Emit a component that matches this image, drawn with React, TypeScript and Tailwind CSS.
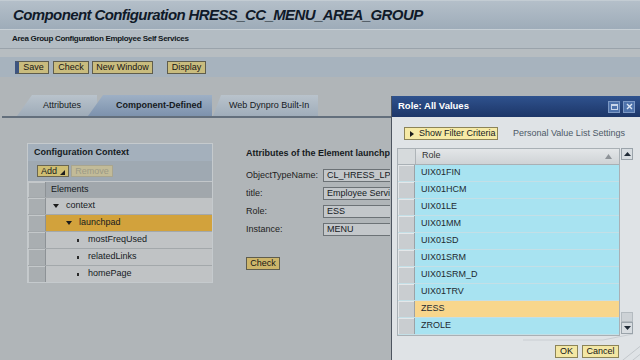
import React from 'react';

const treeRows = [
    { label: 'context', pad: 'pl-[7px]', kind: 'tri', selected: false },
    { label: 'launchpad', pad: 'pl-[20px]', kind: 'tri', selected: true },
    { label: 'mostFreqUsed', pad: 'pl-[31px]', kind: 'dot', selected: false },
    { label: 'relatedLinks', pad: 'pl-[31px]', kind: 'dot', selected: false },
    { label: 'homePage', pad: 'pl-[31px]', kind: 'dot', selected: false },
];

const attrs = [
    { label: 'ObjectTypeName:', value: 'CL_HRESS_LPD_MENU' },
    { label: 'title:', value: 'Employee Services' },
    { label: 'Role:', value: 'ESS' },
    { label: 'Instance:', value: 'MENU' },
];

const roles = ['UIX01FIN', 'UIX01HCM', 'UIX01LE', 'UIX01MM', 'UIX01SD', 'UIX01SRM', 'UIX01SRM_D', 'UIX01TRV', 'ZESS', 'ZROLE'];

const ToolButton: React.FC<{ children: React.ReactNode; className?: string }> = ({ children, className = '' }) => (
    <div className={`h-[13px] flex items-center justify-center border border-[#5f5d4d] bg-[#c9bc7e] text-[9px] leading-none text-[#151515] ${className}`}>
        {children}
    </div>
);

const SelCell: React.FC<{ className?: string }> = ({ className = '' }) => (
    <div className={`w-[18px] shrink-0 self-stretch border-r border-[#8d9296] bg-[#a9aeb1] shadow-[inset_1px_1px_0_#c4c8ca] ${className}`} />
);

export default function App() {
    return (
        <div className="relative w-[640px] h-[360px] overflow-hidden bg-[#b0b5b8] font-['Liberation_Sans',Arial,sans-serif] text-[#161a1e]">
            {/* page header */}
            <div className="h-[30px] flex items-center pl-[13px] bg-gradient-to-b from-[#b4bfc9] to-[#9eacb9] border-t border-[#c3ccd3] border-b border-b-[#c7cfd5]">
                <span className="text-[15px] font-bold italic tracking-[-0.6px] text-[#101a29]">Component Configuration HRESS_CC_MENU_AREA_GROUP</span>
            </div>
            <div className="h-[19px] flex items-center pl-[12px] bg-[#b3bcc3] border-b border-[#9aa3ab]">
                <span className="text-[8px] font-bold tracking-[-0.3px] text-[#121820]">Area Group Configuration Employee Self Services</span>
            </div>
            <div className="h-[8px] bg-[#b7bdc1]" />
            <div className="h-[20px] flex items-center pl-[15px] bg-[#a7b3be]">
                <ToolButton className="w-[34px] border-l-[4px] border-l-[#3e5580]">Save</ToolButton>
                <ToolButton className="w-[36px] ml-[4px]">Check</ToolButton>
                <ToolButton className="w-[61px] ml-[3px]">New Window</ToolButton>
                <ToolButton className="w-[39px] ml-[14px]">Display</ToolButton>
            </div>

            {/* tabs */}
            <div className="mt-[18px] flex items-end h-[21px]">
                <div className="ml-[17px] w-[80px] h-[21px] flex items-center pl-[26px] bg-gradient-to-b from-[#b9c3cc] to-[#9eabb8] [clip-path:polygon(15px_0,100%_0,100%_100%,0_100%)] text-[9px]">
                    Attributes
                </div>
                <div className="relative z-10 -ml-[9px] w-[124px] h-[21px] flex items-center pl-[28px] bg-gradient-to-b from-[#9eb0c5] to-[#7d92ad] [clip-path:polygon(15px_0,100%_0,100%_100%,0_100%)] text-[9px] font-bold">
                    Component-Defined
                </div>
                <div className="ml-[1px] w-[105px] h-[21px] flex items-center pl-[16px] bg-gradient-to-b from-[#b9c3cc] to-[#a0adba] [clip-path:polygon(8px_0,100%_0,100%_100%,0_100%)] text-[9px]">
                    Web Dynpro Built-In
                </div>
            </div>
            <div className="ml-[2px] w-[389px] h-[2px] bg-[#636f7c]" />

            {/* tab content */}
            <div className="mt-[25px] flex items-start">
                <div className="ml-[27px] w-[186px] border border-[#c5cacd] bg-[#b6bbbe]">
                    <div className="h-[17px] flex items-center pl-[6px] bg-[#a4b0bc] text-[9px] font-bold text-[#141a22]">Configuration Context</div>
                    <div className="h-[20px] flex items-center pl-[9px] gap-[2px] bg-[#9fa9b2]">
                        <div className="w-[32px] h-[12px] flex items-center pl-[3px] border border-[#6a6650] bg-[#cfbe72] text-[9px] leading-none">
                            Add
                            <svg width="5" height="5" viewBox="0 0 5 5" className="ml-[3px] mt-[3px]"><polygon points="5,0 5,5 0,5" fill="#1d1d1d" /></svg>
                        </div>
                        <div className="w-[42px] h-[12px] flex items-center justify-center border border-[#a9a58e] bg-[#c2bb98] text-[9px] leading-none text-[#9c9a86]">Remove</div>
                    </div>
                    <div className="h-[16px] flex border-t border-[#c3c7ca] bg-[#a1a7ac]">
                        <SelCell className="bg-[#a3a8ac]" />
                        <div className="flex items-center pl-[5px] text-[9px]">Elements</div>
                    </div>
                    {treeRows.map((r) => (
                        <div key={r.label} className="h-[17px] flex border-t border-[#a3a8ab]">
                            <SelCell />
                            <div className={`flex-1 flex items-center ${r.pad} text-[9px] ${r.selected ? 'bg-[#d2a23c]' : 'bg-[#c0c3c5]'}`}>
                                {r.kind === 'tri' ? (
                                    <svg width="6" height="4" viewBox="0 0 6 4" className="mr-[7px]"><polygon points="0,0 6,0 3,4" fill="#1c1c1c" /></svg>
                                ) : (
                                    <span className="w-[2px] h-[3px] bg-[#2a2a2a] mr-[9px]" />
                                )}
                                {r.label}
                            </div>
                        </div>
                    ))}
                </div>

                {/* clipped by the dialog edge, as in the screenshot */}
                <div className="ml-[33px] w-[144px] overflow-hidden pt-[5px] flex flex-col">
                    <div className="text-[9px] font-bold leading-[11px] whitespace-nowrap">Attributes of the Element launchp</div>
                    <div className="mt-[10px] flex flex-col gap-[5px]">
                        {attrs.map((a) => (
                            <div key={a.label} className="flex items-center h-[13px]">
                                <span className="w-[77px] shrink-0 text-[9px] text-[#222]">{a.label}</span>
                                <div className="w-[67px] shrink-0 h-[13px] overflow-hidden flex items-center pl-[3px] border border-r-0 border-[#6c7276] bg-[#c3c7ca] text-[9px] whitespace-nowrap">{a.value}</div>
                            </div>
                        ))}
                    </div>
                    <ToolButton className="mt-[21px] w-[34px] bg-[#cdb56a] border-[#5b5437]">Check</ToolButton>
                </div>
            </div>

            {/* value help dialog */}
            <div className="absolute left-[391px] top-[96px] w-[252px] h-[268px] flex flex-col border-l border-[#4d5560] bg-[#dfe3e6]">
                <div className="h-[21px] flex items-center pl-[6px] bg-gradient-to-b from-[#2f528e] to-[#1d3668]">
                    <span className="text-[9.5px] font-bold text-white">Role: All Values</span>
                    <div className="ml-auto mr-[8px] flex gap-[3px]">
                        <div className="w-[12px] h-[12px] flex items-center justify-center bg-[#4e72ab] border border-[#7c98c4]">
                            <div className="w-[7px] h-[6px] border border-[#c9d6ea] border-t-2" />
                        </div>
                        <div className="w-[12px] h-[12px] flex items-center justify-center bg-[#4e72ab] border border-[#7c98c4]">
                            <svg width="7" height="7" viewBox="0 0 7 7"><path d="M1 1 L6 6 M6 1 L1 6" stroke="#dce5f2" strokeWidth="1.4" /></svg>
                        </div>
                    </div>
                </div>
                <div className="mt-[10px] flex items-center pl-[12px]">
                    <div className="w-[94px] h-[13px] flex items-center pl-[5px] border border-[#8c8458] bg-[#f6eaa6] text-[9px] leading-none">
                        <svg width="4" height="6" viewBox="0 0 4 6" className="mr-[5px]"><polygon points="0,0 4,3 0,6" fill="#1c1c1c" /></svg>
                        Show Filter Criteria
                    </div>
                    <span className="ml-[15px] text-[9px] text-[#4d5966] whitespace-nowrap">Personal Value List Settings</span>
                </div>
                <div className="mt-[7px] ml-[5px] flex">
                    <div className="w-[223px] flex flex-col border border-[#a9b0b5]">
                        <div className="h-[16px] flex bg-gradient-to-b from-[#e3e6e8] to-[#cfd3d6] border-b border-[#a9b0b5]">
                            <SelCell className="bg-[#d6dadc] border-[#aeb4b8] shadow-none" />
                            <div className="flex-1 flex items-center pl-[6px] text-[9px] text-[#333]">Role</div>
                            <svg width="7" height="5" viewBox="0 0 7 5" className="self-center mr-[7px]"><polygon points="0,5 7,5 3.5,0" fill="#8e9398" /></svg>
                        </div>
                        {roles.map((r) => (
                            <div key={r} className="h-[17px] flex border-b border-[#c4dfe6]">
                                <div className="w-[17px] shrink-0 border-r border-[#9ca2a6] bg-[#c9cdd0] shadow-[inset_1px_1px_0_#e4e7e9]" />
                                <div className={`flex-1 flex items-center pl-[6px] text-[9px] leading-[11px] text-[#1e2a30] ${r === 'ZESS' ? 'bg-[#f8d68c]' : 'bg-[#a8e3f1]'}`}>{r}</div>
                            </div>
                        ))}
                    </div>
                    <div className="ml-[1px] w-[12px] flex flex-col">
                        <div className="h-[12px] flex items-center justify-center border border-[#9aa3aa] bg-[#d8dde1]">
                            <svg width="7" height="4" viewBox="0 0 7 4"><polygon points="0,4 7,4 3.5,0" fill="#1f2a36" /></svg>
                        </div>
                        <div className="flex-1" />
                        <div className="h-[10px] border border-[#b4bbc0] bg-[#cdd2d6]" />
                        <div className="h-[12px] mb-[2px] flex items-center justify-center border border-[#9aa3aa] bg-[#d8dde1]">
                            <svg width="7" height="4" viewBox="0 0 7 4"><polygon points="0,0 7,0 3.5,4" fill="#1f2a36" /></svg>
                        </div>
                    </div>
                </div>
                <div className="relative flex-1 flex items-start justify-end pr-[24px] pt-[9px] gap-[4px]">
                    <svg className="absolute right-0 bottom-0" width="120" height="30" viewBox="0 0 120 30">
                        <path d="M0 6 L80 6 L110 0" stroke="#c9ced2" strokeWidth="1" fill="none" />
                        <path d="M95 30 L120 10 M105 30 L120 18 M113 30 L120 24" stroke="#c2c7cb" strokeWidth="1" />
                    </svg>
                    <ToolButton className="relative w-[23px] bg-[#f3e7a4] border-[#8c8458]">OK</ToolButton>
                    <ToolButton className="relative w-[37px] bg-[#f3e7a4] border-[#8c8458]">Cancel</ToolButton>
                </div>
            </div>
        </div>
    );
}
